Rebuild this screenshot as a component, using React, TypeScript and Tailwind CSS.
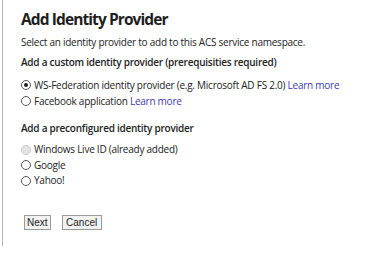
import React from "react";

function Radio({ checked, disabled }: { checked?: boolean; disabled?: boolean }) {
  return (
    <span
      className={
        "inline-flex items-center justify-center w-[10px] h-[10px] rounded-full border mr-[3px] shrink-0 " +
        (disabled ? "border-[#c8c8c8] bg-[#e4e4e4]" : "border-[#555] bg-white")
      }
    >
      {checked && <span className="w-[4px] h-[4px] rounded-full bg-[#222]" />}
    </span>
  );
}

export default function App() {
  const font = { fontFamily: '"Open Sans", "Noto Sans", sans-serif' };
  return (
    <div className="w-[375px] h-[259px] bg-white overflow-hidden" style={font}>
      <div className="ml-[2px] h-[246px] border-l border-[#b5b5b5] pl-[18px] pt-[9px] text-[#222] tracking-[-0.25px]">
        <h1 className="text-[15.5px] font-bold leading-[20px] text-[#1e1e1e] tracking-[-0.9px]">
          Add Identity Provider
        </h1>
        <p className="text-[10px] leading-[14px] mt-[6px]">
          Select an identity provider to add to this ACS service namespace.
        </p>

        <h2 className="text-[10px] font-semibold leading-[14px] mt-[6px]">
          Add a custom identity provider (prerequisities required)
        </h2>
        <div className="mt-[8px] text-[10px] leading-[16px]">
          <div className="flex items-center">
            <Radio checked />
            <span>
              WS-Federation identity provider (e.g. Microsoft AD FS 2.0){" "}
              <span className="text-[#3b3bb0]">Learn more</span>
            </span>
          </div>
          <div className="flex items-center">
            <Radio />
            <span>
              Facebook application <span className="text-[#3b3bb0]">Learn more</span>
            </span>
          </div>
        </div>

        <h2 className="text-[10px] font-semibold leading-[14px] mt-[12px]">
          Add a preconfigured identity provider
        </h2>
        <div className="mt-[7px] text-[10px] leading-[15.5px]">
          <div className="flex items-center">
            <Radio disabled />
            <span>Windows Live ID (already added)</span>
          </div>
          <div className="flex items-center">
            <Radio />
            <span>Google</span>
          </div>
          <div className="flex items-center">
            <Radio />
            <span>Yahoo!</span>
          </div>
        </div>

        <div
          className="flex gap-[11px] mt-[26px] ml-[3px] tracking-normal"
          style={{ fontFamily: '"Liberation Sans", Arial, sans-serif' }}
        >
          <button className="border border-[#9a9a9a] bg-[#f2f2f2] px-[2px] h-[15px] text-[10px] leading-[13px] text-[#222]">
            Next
          </button>
          <button className="border border-[#9a9a9a] bg-[#f2f2f2] px-[3.5px] h-[15px] text-[10px] leading-[13px] text-[#222]">
            Cancel
          </button>
        </div>
      </div>
    </div>
  );
}
